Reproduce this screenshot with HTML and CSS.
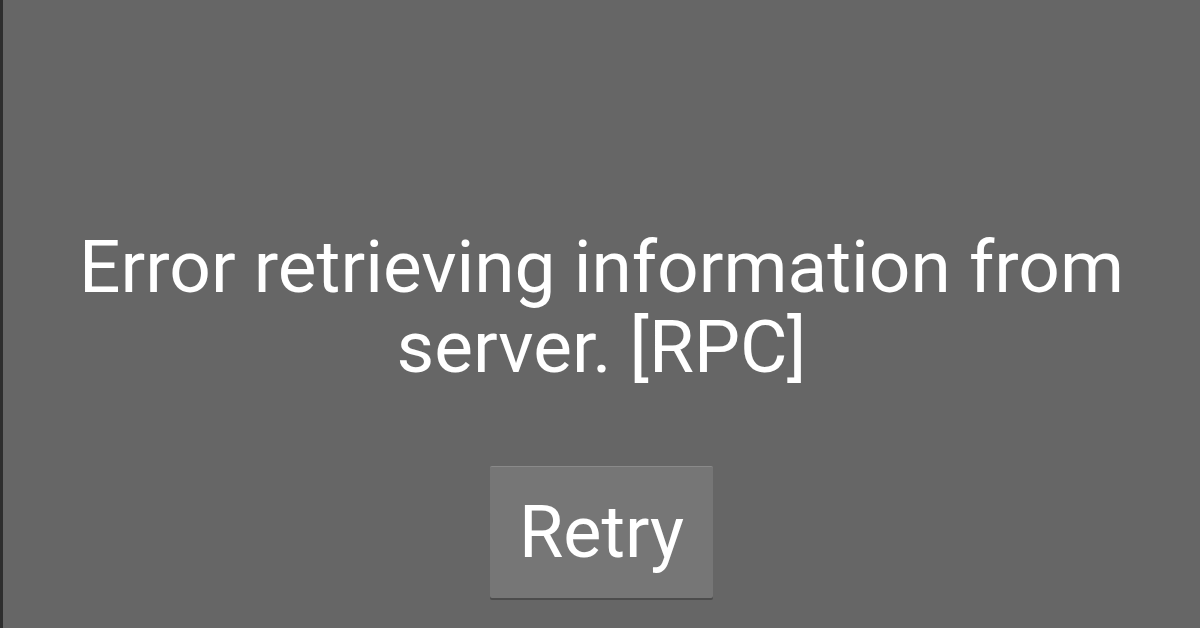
FILE: index.html
```html
<!DOCTYPE html>
<html lang="en">
<head>
    <meta charset="UTF-8">
    <meta name="viewport" content="width=device-width, initial-scale=1.0">
    <title>Error</title>
    <link rel="stylesheet" href="styles.css">
</head>
<body>

    <div class="screen">
        <!-- Error message shown when the server call fails -->
        <p class="message">Error retrieving information from<br>server. [RPC]</p>

        <button class="retry">Retry</button>
    </div>

</body>
</html>
```

FILE: styles.css
```css
html, body {
    margin: 0;
    padding: 0;
    height: 100%;
}

body {
    font-family: Roboto, 'Noto Sans', sans-serif;
    background-color: #666666;
    color: #ffffff;
}

.screen {
    height: 100%;
    box-sizing: border-box;
    border-left: 3px solid #2e2e2e;
    display: flex;
    flex-direction: column;
    align-items: center;
    padding-top: 227px;
}

.message {
    margin: 0;
    font-size: 73px;
    line-height: 80px;
    text-align: center;
}

.retry {
    margin-top: 79px;
    width: 223px;
    height: 132px;
    padding: 0;
    font-family: Roboto, 'Noto Sans', sans-serif;
    font-size: 72px;
    color: #ffffff;
    background-color: #767676;
    border: none;
    border-top: 1px solid #8a8a8a;
    border-radius: 2px;
    box-shadow: 0 2px 0 #4c4c4c;
    cursor: pointer;
}
```
